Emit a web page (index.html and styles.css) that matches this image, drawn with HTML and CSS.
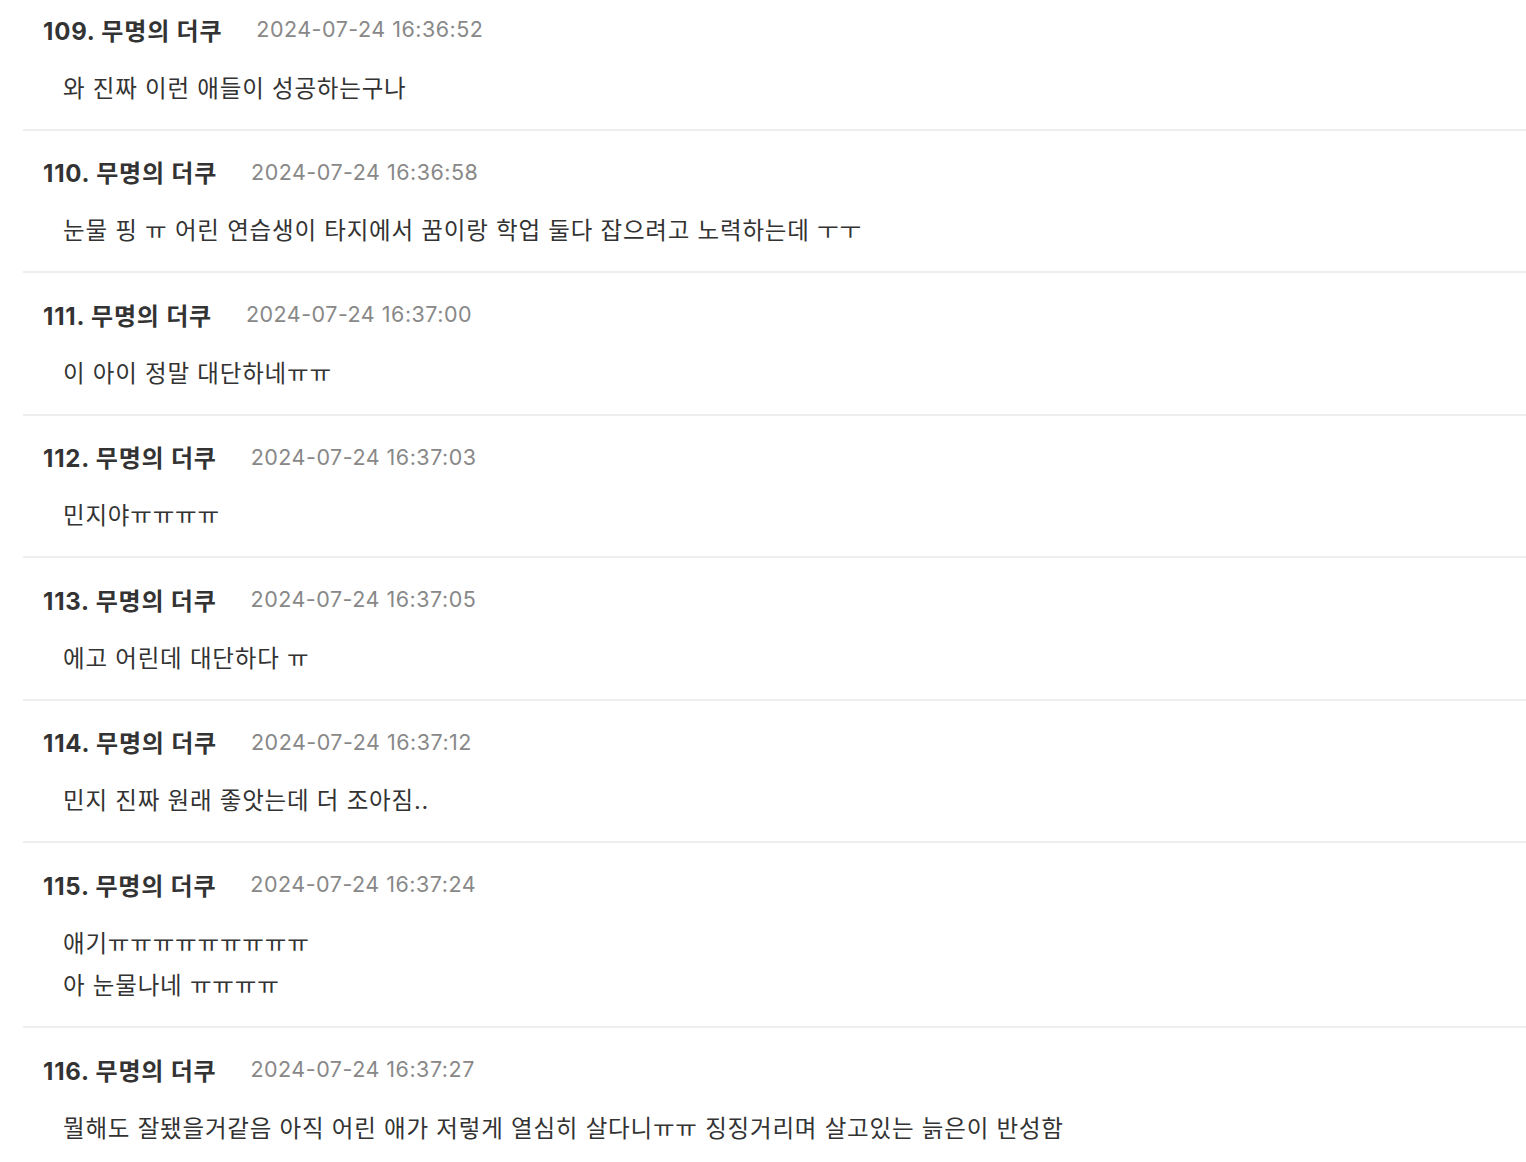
FILE: index.html
```html
<!DOCTYPE html>
<html lang="ko">
<head>
<meta charset="utf-8">
<title>댓글</title>
<link rel="stylesheet" href="styles.css">
</head>
<body>
<div class="comments">
  <div class="comment">
    <div class="head"><span class="name">109. 무명의 더쿠</span><span class="date">2024-07-24 16:36:52</span></div>
    <div class="text">와 진짜 이런 애들이 성공하는구나</div>
  </div>
  <div class="comment">
    <div class="head"><span class="name">110. 무명의 더쿠</span><span class="date">2024-07-24 16:36:58</span></div>
    <div class="text">눈물 핑 ㅠ 어린 연습생이 타지에서 꿈이랑 학업 둘다 잡으려고 노력하는데 ㅜㅜ</div>
  </div>
  <div class="comment">
    <div class="head"><span class="name">111. 무명의 더쿠</span><span class="date">2024-07-24 16:37:00</span></div>
    <div class="text">이 아이 정말 대단하네ㅠㅠ</div>
  </div>
  <div class="comment">
    <div class="head"><span class="name">112. 무명의 더쿠</span><span class="date">2024-07-24 16:37:03</span></div>
    <div class="text">민지야ㅠㅠㅠㅠ</div>
  </div>
  <div class="comment">
    <div class="head"><span class="name">113. 무명의 더쿠</span><span class="date">2024-07-24 16:37:05</span></div>
    <div class="text">에고 어린데 대단하다 ㅠ</div>
  </div>
  <div class="comment">
    <div class="head"><span class="name">114. 무명의 더쿠</span><span class="date">2024-07-24 16:37:12</span></div>
    <div class="text">민지 진짜 원래 좋앗는데 더 조아짐..</div>
  </div>
  <div class="comment">
    <div class="head"><span class="name">115. 무명의 더쿠</span><span class="date">2024-07-24 16:37:24</span></div>
    <div class="text">애기ㅠㅠㅠㅠㅠㅠㅠㅠㅠ<br>아 눈물나네 ㅠㅠㅠㅠ</div>
  </div>
  <div class="comment">
    <div class="head"><span class="name">116. 무명의 더쿠</span><span class="date">2024-07-24 16:37:27</span></div>
    <div class="text">뭘해도 잘됐을거같음 아직 어린 애가 저렇게 열심히 살다니ㅠㅠ 징징거리며 살고있는 늙은이 반성함</div>
  </div>
</div>
</body>
</html>
```

FILE: styles.css
```css
html, body {
  margin: 0;
  padding: 0;
  background: #ffffff;
}

body {
  font-family: Inter, "Noto Sans CJK KR", sans-serif;
  color: #333333;
  overflow: hidden;
}

.comments {
  margin-top: -12px;
  padding-left: 23px;
}

.comment {
  padding: 21px 0 18.25px;
  border-bottom: 2px solid #eeeeee;
}

.head {
  display: flex;
  align-items: center;
  height: 40px;
  padding-left: 20px;
  gap: 34px;
}

.name {
  font-size: 24px;
  font-weight: 700;
  letter-spacing: 0.8px;
  color: #333333;
}

.date {
  font-size: 21.5px;
  letter-spacing: 0.5px;
  color: #888888;
}

.text {
  margin-top: 18.75px;
  padding-left: 40px;
  font-size: 23.5px;
  line-height: 42.5px;
  letter-spacing: 0.8px;
  color: #333333;
}
```
